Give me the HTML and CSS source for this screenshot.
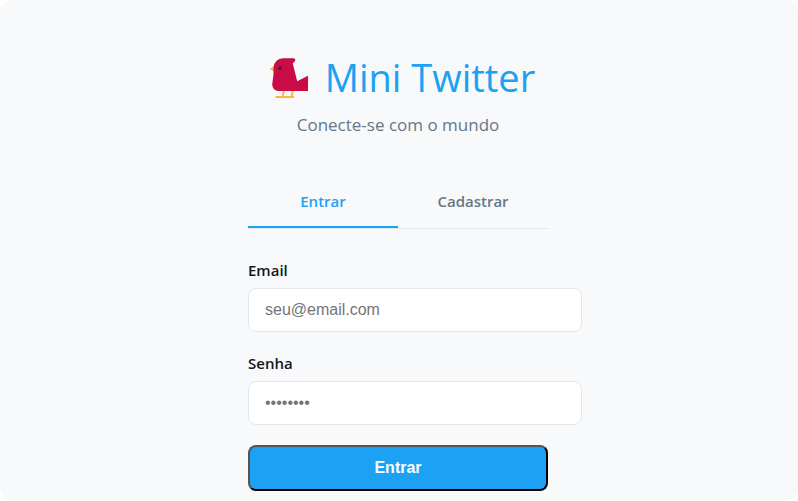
FILE: index.html
```html
<!DOCTYPE html>
<html lang="pt-BR">
<head>
<meta charset="utf-8">
<meta name="viewport" content="width=device-width, initial-scale=1">
<title>Mini Twitter</title>
<link rel="stylesheet" href="styles.css">
</head>
<body>
<main class="page">
  <div class="auth">
    <header class="brand">
      <h1 class="brand-title">
        <svg class="brand-icon" viewBox="0 0 40 42" aria-hidden="true">
          <path d="M5.500 9.500L0.600 13 5 15.500z" fill="#fbb83c"/>
          <path d="M15 34L13.600 41M24 34L22.500 41M6.500 41H25" fill="none" stroke="#fbb83c" stroke-width="1.900"/>
          <path d="M14 2.300H24.500Q27 2.500 26 5L23.800 7.500 28.200 25.300 39 19.800V35H9.500Q3.600 34.500 3.200 28.500L4.500 18V11.500Q5.500 3 14 2.300z" fill="#c90b46"/>
          <circle cx="11" cy="12.300" r="1.700" fill="#292b2f"/>
        </svg>
        <span>Mini Twitter</span>
      </h1>
      <p class="brand-tagline">Conecte-se com o mundo</p>
    </header>
    <div class="tabs" role="tablist">
      <button class="tab tab-active" type="button" role="tab" aria-selected="true">Entrar</button>
      <button class="tab" type="button" role="tab" aria-selected="false">Cadastrar</button>
    </div>
    <form class="form">
      <div class="field">
        <label class="field-label" for="email">Email</label>
        <input class="field-input" id="email" type="email" placeholder="seu@email.com">
      </div>
      <div class="field">
        <label class="field-label" for="password">Senha</label>
        <input class="field-input" id="password" type="password" placeholder="••••••••">
      </div>
      <button class="submit" type="submit">Entrar</button>
    </form>
  </div>
</main>
</body>
</html>
```
FILE: styles.css
```css
body {
  margin: 0;
  background: #fff;
  color: #14171a;
  font-family: "Open Sans", "Noto Sans", sans-serif;
  font-size: 16px;
}

.page {
  padding: 47px 2px 9px 0;
  border-radius: 12px;
  background: #f7f9fb;
}

.auth {
  width: 300px;
  margin: 0 auto;
}

.brand {
  margin-bottom: 41px;
  text-align: center;
}

.brand-title {
  display: flex;
  justify-content: center;
  align-items: center;
  gap: 16px;
  margin: 0 0 8px;
  padding-left: 8px;
  color: #1da1f2;
  font-size: 38px;
  font-weight: 400;
  line-height: 60px;
  white-space: nowrap;
}

.brand-icon {
  width: 40px;
  height: 42px;
  flex: none;
}

.brand-tagline {
  margin: 0;
  color: #657786;
  font-size: 17px;
  line-height: 20px;
}

.tabs {
  display: flex;
  margin-bottom: 30px;
  border-bottom: 1px solid #e1e8ed;
}

.tab {
  flex: 1;
  padding: 16px 0;
  border: 0;
  border-bottom: 2px solid transparent;
  background: none;
  color: #657786;
  font-family: inherit;
  font-size: 15px;
  font-weight: 600;
  line-height: 18px;
}

.tab-active {
  border-bottom-color: #1da1f2;
  color: #1da1f2;
}

.field {
  margin-bottom: 20px;
}

.field-label {
  display: block;
  margin-bottom: 6px;
  font-size: 15px;
  font-weight: 600;
  line-height: 23px;
}

.field-input {
  display: block;
  box-sizing: content-box;
  width: 100%;
  padding: 12px 16px;
  border: 1px solid #e1e8ed;
  border-radius: 8px;
  background: #fff;
  font-family: "Liberation Sans", Arial, sans-serif;
  font-size: 16px;
  line-height: 18px;
}

.submit {
  display: block;
  width: 100%;
  padding: 12px;
  border: 2px outset #000;
  border-radius: 8px;
  background: #1da1f2;
  color: #fff;
  font-family: "Liberation Sans", Arial, sans-serif;
  font-size: 16px;
  font-weight: 700;
  line-height: 18px;
}
```
